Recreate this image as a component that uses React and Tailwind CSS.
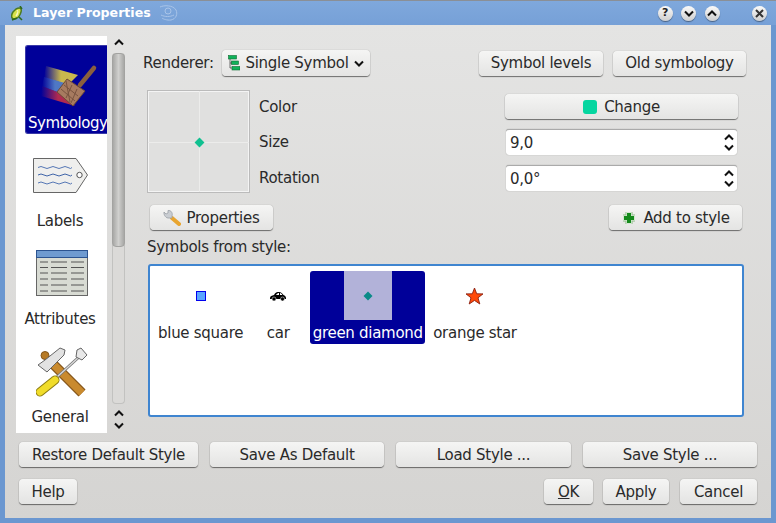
const btn = 'flex items-center justify-center rounded-[4px] bg-gradient-to-b from-[#f5f5f4] to-[#e4e4e3] shadow-[0_1px_1px_rgba(0,0,0,0.5),0_0_1px_rgba(0,0,0,0.35)] h-[25px] text-[#2a2a2a] whitespace-nowrap'

function Chevron({ up, className = '' }) {
  return (
    <svg width="10" height="7" viewBox="0 0 10 7" className={className}>
      <path d={up ? 'M1 5.5 L5 1.5 L9 5.5' : 'M1 1.5 L5 5.5 L9 1.5'} fill="none" stroke="#111" strokeWidth="2" />
    </svg>
  )
}

function QgisLogo() {
  return (
    <svg width="12" height="15" viewBox="0 0 12 15">
      <path d="M5 3 C9 1 11 2 10 6 C9 10 6 13 3 13 C0 13 0 9 2 6 C3 5 4 4 5 3 Z" fill="#d8e24a" stroke="#4c7a22" strokeWidth="1.5" />
      <path d="M6 5 C7 4 7 8 5 10" fill="none" stroke="#f5f7c0" strokeWidth="1.5" />
      <path d="M9 0 L11 3 M1 14 L6 12 M8 11 L11 14" stroke="#2f6a1c" strokeWidth="1.5" />
    </svg>
  )
}

function Gecko() {
  return (
    <svg width="19" height="16" viewBox="0 0 19 16" fill="none" stroke="#a9c4e8" strokeWidth="1">
      <path d="M1 2 C5 0 14 0 17 5 C19 9 17 14 12 15 C8 15.500 4 14 3 13" />
      <circle cx="9" cy="6" r="3" />
      <path d="M2 10 C6 12 11 12 15 10" />
    </svg>
  )
}

function WinButton({ children }) {
  return (
    <div className="flex items-center justify-center w-[15px] h-[15px] rounded-full bg-gradient-to-b from-[#fafafa] to-[#cfcfcf] shadow-[0_1px_1px_rgba(0,0,0,0.4)]">
      {children}
    </div>
  )
}

function SymbologyIcon() {
  return (
    <svg width="64" height="50" viewBox="36 58 64 50">
      <defs>
        <linearGradient id="y" x1="0" x2="1" y1="0" y2="0"><stop offset="0" stopColor="#c9b84e" stopOpacity="0" /><stop offset="0.5" stopColor="#c9b84e" /></linearGradient>
        <linearGradient id="b" x1="0" x2="1" y1="0" y2="0"><stop offset="0" stopColor="#4f78c4" stopOpacity="0" /><stop offset="0.5" stopColor="#4f78c4" /></linearGradient>
        <linearGradient id="r" x1="0" x2="1" y1="0" y2="0"><stop offset="0" stopColor="#b02a50" stopOpacity="0" /><stop offset="0.5" stopColor="#b02a50" /></linearGradient>
      </defs>
      <path d="M46 63 L78 72 L68 82 L44 74 Z" fill="url(#y)" />
      <path d="M44 74 L68 81 L62 91 L42 83 Z" fill="url(#b)" />
      <path d="M42 83 L60 90 L75 103 L41 93 Z" fill="url(#r)" />
      <path d="M94 65 L80 82" stroke="#8a5f3e" strokeWidth="4.500" strokeLinecap="round" />
      <path d="M67 76 L85 88 L73 103 L57 89 Z" fill="#a77b60" stroke="#6d4a36" strokeWidth="1" />
      <path d="M64 82 L78 93 M61 86 L75 98 M66 78 L70 99 M72 82 L66 95 M77 86 L71 100" stroke="#7a5440" strokeWidth="1" />
    </svg>
  )
}

function LabelsIcon() {
  const wave = y => `M38 ${y} q3 -2 6 0 t6 0 t6 0 t6 0 t6 0 t4 0`
  return (
    <svg width="56" height="36" viewBox="33 158 56 36">
      <path d="M33.500 158.500 L76 158.500 L87.500 175 L76 192.500 L33.500 192.500 Z" fill="#efefed" stroke="#666" strokeWidth="1" />
      <circle cx="79.500" cy="175" r="2.700" fill="#fff" stroke="#555" strokeWidth="1" />
      <path d={wave(167.500)} fill="none" stroke="#5577b5" strokeWidth="1" />
      <path d={wave(175)} fill="none" stroke="#3f64a8" strokeWidth="1" />
      <path d={wave(183)} fill="none" stroke="#5577b5" strokeWidth="1" />
    </svg>
  )
}

function AttributesIcon() {
  const ys = [262, 267.500, 273, 279, 285, 291]
  return (
    <svg width="52" height="47" viewBox="36 250 52 47">
      <rect x="36.500" y="250.500" width="51" height="45" fill="#d8dbd3" stroke="#666" />
      <rect x="36.500" y="250.500" width="51" height="7" fill="#6f9bd0" stroke="#2c5490" />
      {ys.map(y => (
        <path key={y} d={`M40 ${y} H48 M51 ${y} H67 M71 ${y} H84`} stroke="#555" strokeWidth="1" />
      ))}
    </svg>
  )
}

function GeneralIcon() {
  return (
    <svg width="52" height="52" viewBox="34 347 52 52">
      <circle cx="43" cy="355.500" r="4" fill="#b77a24" stroke="#85561a" />
      <path d="M50 363 L80 393" stroke="#85561a" strokeWidth="10" />
      <path d="M50 363 L80 393" stroke="#c98a2e" strokeWidth="7.500" />
      <path d="M36 365 L43 360 L58 348 L63 350 L62 355 L45 372 Z" fill="#e2e2e2" stroke="#666" />
      <path d="M55 377 L77 357" stroke="#777" strokeWidth="3" />
      <path d="M55 377 L77 357" stroke="#ddd" strokeWidth="1.200" />
      <path d="M75 350 L79 348 L85 355 L80 360 L74 357 Z" fill="#e8e8e8" stroke="#666" />
      <path d="M38 392 L53 380" stroke="#8a7a10" strokeWidth="9" strokeLinecap="round" />
      <path d="M38 392 L53 380" stroke="#f0dc2a" strokeWidth="7" strokeLinecap="round" />
    </svg>
  )
}

function RendererIcon() {
  return (
    <svg width="12" height="16" viewBox="0 0 12 16">
      <rect x="0.500" y="0.500" width="8" height="3.500" fill="#10b25a" stroke="#0f6b32" strokeWidth="0.600" />
      <rect x="3.500" y="6" width="7" height="3.500" fill="#10b25a" stroke="#0f6b32" strokeWidth="0.600" />
      <rect x="4" y="11.500" width="8" height="3.500" fill="#10b25a" stroke="#0f6b32" strokeWidth="0.600" />
      <path d="M2 4 V8 H4 M2 8 V13 H4" fill="none" stroke="#333" strokeWidth="0.700" />
    </svg>
  )
}

function WrenchIcon() {
  return (
    <svg width="18" height="17" viewBox="0 0 18 17">
      <path d="M9 9 L16 15" stroke="#e8a530" strokeWidth="4" strokeLinecap="round" />
      <path d="M1 3 L3 5 L5 4 L5 1.500 C8 1 10 4 9 7 L9 9 L6 9 C3 9.500 0.500 6 1 3 Z" fill="#c9cdd2" stroke="#9aa0a6" strokeWidth="0.800" />
    </svg>
  )
}

function PlusIcon() {
  return (
    <svg width="16" height="16" viewBox="0 0 16 16">
      <path d="M8 2 V14 M2 8 H14" stroke="#8fb98a" strokeWidth="7" strokeLinejoin="round" />
      <path d="M8 2 V14 M2 8 H14" stroke="#d4e8d0" strokeWidth="5.500" />
      <path d="M8 3 V13 M3 8 H13" stroke="#148a1c" strokeWidth="4" />
    </svg>
  )
}

function CarIcon() {
  return (
    <svg width="18" height="12" viewBox="0 0 18 12">
      <path d="M1 8 C1 6 3 5.500 5 5 C6 2.500 8 2 10 2 C12 2 13.500 3.500 14.500 5 C16 5.500 17 6.500 17 8 L17 9 L1 9 Z" fill="#000" />
      <path d="M7 5 C8 3.500 9 3 10 3 L10 5 Z M11 3 C12 3.200 13 4 13.300 5 L11 5 Z" fill="#fff" />
      <circle cx="5" cy="9" r="2" fill="#000" stroke="#fff" strokeWidth="0.500" />
      <circle cx="13.500" cy="9" r="2" fill="#000" stroke="#fff" strokeWidth="0.500" />
    </svg>
  )
}

function StarIcon() {
  return (
    <svg width="19" height="18" viewBox="0 0 19 18">
      <path d="M9.500 1 L11.700 6.800 L18 6.900 L13 10.800 L14.800 17 L9.500 13.400 L4.200 17 L6 10.800 L1 6.900 L7.300 6.800 Z" fill="#ff4a0a" stroke="#8a1f10" strokeWidth="0.900" />
    </svg>
  )
}

function Diamond({ color, size }) {
  return (
    <svg width={size} height={size} viewBox="0 0 10 10">
      <path d="M5 0.500 L9.500 5 L5 9.500 L0.500 5 Z" fill={color} />
    </svg>
  )
}

function NavItem({ label, icon, selected }) {
  if (selected) {
    return (
      <div className="flex flex-col items-center h-[89px] w-[82px] ml-[9px] bg-[#000099] rounded-l-[3px] border border-r-0 border-[#3a3aa8] text-white">
        <div className="h-[65px] flex items-end justify-start w-full pl-[10px]">{icon}</div>
        <div className="mt-[3px] pl-[2px] w-full whitespace-nowrap tracking-[-0.45px]">{label}</div>
      </div>
    )
  }
  return (
    <div className="flex flex-col items-center h-[89px] w-[70px] ml-[9px]">
      <div className="h-[66px] flex items-start justify-center pt-[6px]">{icon}</div>
      <div className="mt-[3px] whitespace-nowrap">{label}</div>
    </div>
  )
}

function SpinBox({ value }) {
  return (
    <div className="flex items-center justify-between h-[26px] mx-[1px] bg-white rounded-[3px] border-t border-[#aaa] shadow-[0_0_1px_rgba(0,0,0,0.4)] pl-[4px] pr-[3px]">
      <span>{value}</span>
      <div className="flex flex-col gap-[3px]">
        <Chevron up />
        <Chevron />
      </div>
    </div>
  )
}

function SymbolItem({ label, children, selected, className = '' }) {
  return (
    <div className={`flex flex-col items-center h-[73px] rounded-[3px] ${selected ? 'bg-[#000099] text-white' : ''} ${className}`}>
      <div className={`flex items-center justify-center w-[48px] h-[49px] ${selected ? 'bg-[#b2b2d9]' : ''}`}>{children}</div>
      <div className="mt-[4px] whitespace-nowrap">{label}</div>
    </div>
  )
}

export default function App() {
  return (
    <div className="flex flex-col w-[776px] h-[523px] overflow-hidden text-[15px] tracking-[-0.28px] leading-[18px] text-[#2a2a2a] font-['DejaVu_Sans',sans-serif]">
      <div className="flex items-center h-[25px] shrink-0 bg-gradient-to-b from-[#7fa8dc] to-[#76a0d7] border-t border-[#8a8f96] pl-[11px] pr-[9px]">
        <QgisLogo />
        <span className="ml-[10px] text-[12.6px] tracking-normal font-bold text-white">Layer Properties</span>
        <div className="ml-[8px]"><Gecko /></div>
        <div className="ml-auto flex items-center gap-[8.500px]">
          <WinButton><span className="text-[11px] font-bold text-[#222]">?</span></WinButton>
          <WinButton><Chevron /></WinButton>
          <WinButton><Chevron up /></WinButton>
          <div className="ml-[24px]">
            <WinButton>
              <svg width="9" height="9" viewBox="0 0 9 9"><path d="M1 1 L8 8 M8 1 L1 8" stroke="#333" strokeWidth="2" /></svg>
            </WinButton>
          </div>
        </div>
      </div>

      <div className="flex flex-col flex-1 border-x-[5px] border-b-[5px] border-[#6b97d0] bg-gradient-to-b from-[#e4e4e3] to-[#d5d4d2] px-[14px] pt-[11px]">
        <div className="flex h-[397px] shrink-0 -ml-[3px]">
          {/* left page list */}
          <div className="flex flex-col gap-[9px] w-[91px] h-full bg-white pt-[9px] overflow-hidden">
            <NavItem selected label="Symbology" icon={<SymbologyIcon />} />
            <NavItem label="Labels" icon={<div className="mt-[9px] ml-[1px]"><LabelsIcon /></div>} />
            <NavItem label="Attributes" icon={<div className="mt-[3px] ml-[3px]"><AttributesIcon /></div>} />
            <NavItem label="General" icon={<div className="mt-[2px] ml-[3px]"><GeneralIcon /></div>} />
          </div>

          {/* scrollbar */}
          <div className="flex flex-col items-center w-[13px] ml-[5px] h-full">
            <div className="h-[13px] flex items-center"><Chevron up /></div>
            <div className="flex-1 w-full rounded-[4px] border-x border-b border-[#c2c2c0] bg-[#dbdad8] mt-[4px]">
              <div className="h-[194px] -mx-[1px] rounded-[4px] border border-[#a3a3a1] bg-gradient-to-r from-[#a8a8a6] via-[#d0d0ce] to-[#a8a8a6]" />
            </div>
            <div className="flex flex-col items-center gap-[5px] mt-[6px] mb-[4px]">
              <Chevron up />
              <Chevron />
            </div>
          </div>

          {/* right panel */}
          <div className="flex flex-col flex-1 ml-[18px] mr-[11px] pt-[14px]">
            <div className="flex items-center h-[26px]">
              <span className="w-[72px] whitespace-nowrap">Renderer:</span>
              <div className={`${btn} h-[26px] ml-[7px] w-[148px] gap-[5px]`}>
                <RendererIcon />
                <span>Single Symbol</span>
                <Chevron />
              </div>
              <div className={`${btn} ml-auto w-[124px]`}>Symbol levels</div>
              <div className={`${btn} ml-[10px] w-[133px]`}>Old symbology</div>
            </div>

            <div className="flex mt-[14px] ml-[4px] mr-[8px]">
              <div className="relative w-[103px] h-[103px] border border-[#bbb] bg-[#e0e0df] shadow-[inset_0_0_0_1px_#f4f4f4] flex items-center justify-center">
                <div className="absolute left-[50%] top-0 bottom-0 w-px bg-[#ececeb]" />
                <div className="absolute top-[50%] left-0 right-0 h-px bg-[#ececeb]" />
                <div className="relative ml-[1px] mt-[1px]"><Diamond color="#10c090" size={11} /></div>
              </div>
              <div className="grid grid-cols-[1fr_233px] grid-rows-[25px_26px_26px] gap-y-[10px] flex-1 pt-[4px] pl-[9px] items-center">
                <span>Color</span>
                <div className={`${btn} gap-[7px]`}>
                  <div className="w-[14px] h-[14px] rounded-[3px] bg-[#05d6a0]" />
                  <span>Change</span>
                </div>
                <span>Size</span>
                <SpinBox value="9,0" />
                <span>Rotation</span>
                <SpinBox value="0,0°" />
              </div>
            </div>

            <div className="flex items-center justify-between mt-[12px] ml-[7px] mr-[4px]">
              <div className={`${btn} w-[123px] gap-[5px]`}>
                <WrenchIcon />
                <span>Properties</span>
              </div>
              <div className={`${btn} w-[133px] gap-[6px]`}>
                <PlusIcon />
                <span>Add to style</span>
              </div>
            </div>

            <div className="h-[18px] mt-[8px] ml-[4px]">Symbols from style:</div>

            <div className="flex items-start gap-[8px] h-[153px] mt-[8px] ml-[5px] mr-[2px] bg-white rounded-[3px] border-2 border-[#3f85d0] pt-[5px] pl-[5px]">
              <SymbolItem label="blue square" className="px-[3px]">
                <div className="w-[10px] h-[10px] bg-[#5aa5ff] border border-[#0000ee]" />
              </SymbolItem>
              <SymbolItem label="car"><CarIcon /></SymbolItem>
              <SymbolItem selected label="green diamond" className="w-[115px]"><Diamond color="#0a8a88" size={10} /></SymbolItem>
              <SymbolItem label="orange star"><StarIcon /></SymbolItem>
            </div>
          </div>
        </div>

        <div className="flex mt-[9px] gap-[12px]">
          <div className={`${btn} w-[179px]`}>Restore Default Style</div>
          <div className={`${btn} w-[174px]`}>Save As Default</div>
          <div className={`${btn} w-[175px]`}>Load Style ...</div>
          <div className={`${btn} w-[174px]`}>Save Style ...</div>
        </div>

        <div className="flex mt-[12px]">
          <div className={`${btn} w-[58px]`}>Help</div>
          <div className={`${btn} ml-auto w-[49px]`}><span><span className="underline">O</span>K</span></div>
          <div className={`${btn} ml-[10px] w-[66px]`}>Apply</div>
          <div className={`${btn} ml-[11px] w-[77px]`}>Cancel</div>
        </div>
      </div>
    </div>
  )
}
